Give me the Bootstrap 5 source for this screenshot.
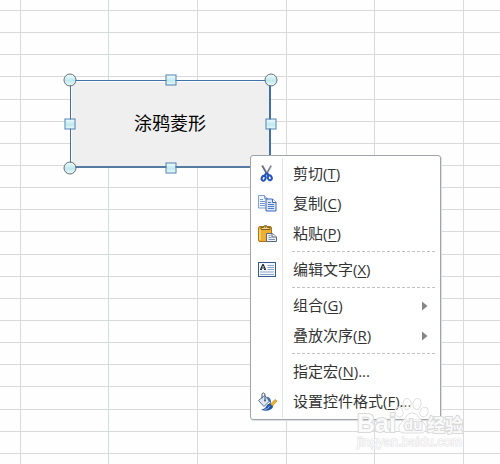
<!DOCTYPE html>
<html lang="zh-CN">
<head>
<meta charset="utf-8">
<meta name="viewport" content="width=device-width, initial-scale=1">
<title>工作表</title>
<link href="https://cdn.jsdelivr.net/npm/bootstrap@5.3.0/dist/css/bootstrap.min.css" rel="stylesheet">
<style>
  body { font-family: "Open Sans", "Noto Sans CJK SC", sans-serif; background: #fefefe; }
  .sheet-grid { table-layout: fixed; border-collapse: separate; border-spacing: 0; min-width: 100%; width: 0; }
  .sheet-grid col { width: 89px; }
  .sheet-grid col:nth-child(3n+2) { width: 88px; }
  .sheet-grid col:first-child { width: 21px; }
  .sheet-grid td { height: 22px; padding: 0; border: solid #d8dadb; border-width: 0 1px 1px 0; }
  .sheet-grid tr:first-child td { height: 11px; }
  .sheet-grid tr:nth-child(7n+5) td { height: 23px; }

  /* selected form control */
  .form-shape { left: 70px; top: 80px; width: 201px; height: 88px; }
  .shape-face { background: #efefef; border: 1px solid #3f73a8; border-right-width: 2px; border-bottom: 2px solid #557ba3; box-shadow: inset 1px 1px #fff; font-size: 18px; font-weight: 400; color: #000; }
  .grip { width: 11px; height: 11px; border: 1px solid #4f81b0; background: linear-gradient(#edfbfc, #bfe9ee 55%, #e4f9fb); }
  .grip-round { width: 13px; height: 13px; border-color: #666e76; border-radius: 50%; }

  /* context menu */
  .ctx-menu { left: 250px; top: 155px; width: 191px; padding: 3px 1px 2px; background: #fff; border: 1px solid #9fa4ab; border-radius: 3px; box-shadow: 1px 1px 1px #dcdee0; }
  .ctx-menu::before { content: ""; position: absolute; left: 31px; top: 2px; bottom: 1px; border-left: 1px solid #e1e4e7; }
  .ctx-item { height: 30px; border: 0; background: none; padding: 0 11px 0 5px; font-size: 15px; line-height: 20px; color: #333; white-space: nowrap; }
  .ctx-item:hover { background: #fdf1c9; }
  .ctx-icon { width: 20px; height: 20px; margin-right: 16px; }
  .ctx-label { margin-bottom: 2px; }
  .ctx-item u { text-underline-offset: 2px; text-decoration-thickness: 1px; }
  .ctx-rule { height: 6px; margin-left: 40px; margin-right: 2px; }
  .ctx-rule::before { content: ""; display: block; height: 1px; margin-top: 2px; background: repeating-linear-gradient(90deg, #bfc3c7 0 3px, transparent 3px 5px); }
  .ctx-arrow { width: 6px; height: 10px; }

  .watermark { left: 355px; top: 397px; width: 110px; height: 54px; pointer-events: none; }
</style>
<script src="https://cdn.jsdelivr.net/npm/bootstrap@5.3.0/dist/js/bootstrap.bundle.min.js"></script>
</head>
<body>
<main class="position-relative vh-100 overflow-hidden">
  <table class="sheet-grid" aria-label="工作表">
    <colgroup id="cols"></colgroup>
    <tbody id="rows"></tbody>
  </table>

  <div class="form-shape position-absolute">
    <button type="button" class="shape-face w-100 h-100 p-0 d-block">涂鸦菱形</button>
    <span class="grip grip-round position-absolute translate-middle top-0 start-0"></span>
    <span class="grip position-absolute translate-middle top-0 start-50"></span>
    <span class="grip grip-round position-absolute translate-middle top-0 start-100"></span>
    <span class="grip position-absolute translate-middle top-50 start-0"></span>
    <span class="grip position-absolute translate-middle top-50 start-100"></span>
    <span class="grip grip-round position-absolute translate-middle top-100 start-0"></span>
    <span class="grip position-absolute translate-middle top-100 start-50"></span>
  </div>

  <div class="ctx-menu position-absolute d-flex flex-column" role="menu">
    <button type="button" role="menuitem" class="ctx-item d-flex align-items-center">
      <svg class="ctx-icon" viewBox="0 0 20 20" fill="none" aria-hidden="true">
        <path d="M5.2 1.5 11.2 12" stroke="#777f8c" stroke-width="2"/><path d="M14.2 1.5 8.3 12" stroke="#a4adb9" stroke-width="2"/><path d="M5.2 2 9.5 9.5M14 2 10.5 8" stroke="#596373" stroke-width=".7"/>
        <path d="m9.7 8.7-2.3 3.2m2.3-3.2 2.3 3" stroke="#2857b8" stroke-width="2"/>
        <ellipse cx="6.6" cy="14.3" rx="1.9" ry="2.4" transform="rotate(25 6.6 14.3)" stroke="#2455bc" stroke-width="2"/>
        <ellipse cx="12.8" cy="13.8" rx="1.9" ry="2.4" transform="rotate(-25 12.8 13.8)" stroke="#2455bc" stroke-width="2"/>
      </svg>
      <span class="ctx-label">剪切(<u>T</u>)</span>
    </button>
    <button type="button" role="menuitem" class="ctx-item d-flex align-items-center">
      <svg class="ctx-icon" viewBox="0 0 20 20" aria-hidden="true">
        <path d="M1.5 1.5h6l3 3v9.5h-9z" fill="#f0f5ff" stroke="#7f9ed2"/><path d="M7.5 1.5v3h3" fill="#c4d5f4" stroke="#7f9ed2"/>
        <path d="M3 5.5h3M3 7.5h5M3 9.5h5M3 11.5h5" stroke="#7697d2"/>
        <path d="M9 5h6.5l3.5 3.5v8.5H9z" fill="#d8e6ff" stroke="#3e66b7"/><path d="M15.5 5v3.5H19" fill="#fff" stroke="#3e66b7"/>
        <path d="M11 8.5h3M11 10.5h6M11 12.5h6M11 14.5h6" stroke="#517bcb"/>
      </svg>
      <span class="ctx-label">复制(<u>C</u>)</span>
    </button>
    <button type="button" role="menuitem" class="ctx-item d-flex align-items-center">
      <svg class="ctx-icon" viewBox="0 0 20 20" aria-hidden="true">
        <rect x="1.5" y="2.5" width="13" height="15" rx="1.5" fill="#edaf32" stroke="#ad7314"/>
        <path d="M3 5v11" stroke="#ffdb72" stroke-width="1.5"/>
        <path d="M4 5.5v-2h2.5a2 2 0 0 1 4 0H13v2z" fill="#f3d780" stroke="#795f28"/><circle cx="8.5" cy="3" r=".8" fill="#69531f"/>
        <path d="M9.5 9.5h6l4 3.5v4.5h-10z" fill="#edf1f6" stroke="#5b677a"/><path d="M15 9.5V13h4.5" fill="#fff" stroke="#5b677a"/>
        <path d="M11.5 11.5h2M11.5 13.5h3M11.5 15.5H18" stroke="#8293aa"/>
      </svg>
      <span class="ctx-label">粘贴(<u>P</u>)</span>
    </button>
    <div class="ctx-rule" role="separator"></div>
    <button type="button" role="menuitem" class="ctx-item d-flex align-items-center">
      <svg class="ctx-icon" viewBox="0 0 20 20" aria-hidden="true">
        <rect x="1.5" y="2.5" width="17" height="14" fill="#f4f8fd" stroke="#345a8c"/>
        <path d="M3.5 9.5 5.800 4.5h.4l2.300 5M4.500 8h3M3 9.500h2M7 9.500h2" fill="none" stroke="#252b34" stroke-width="1.2"/>
        <path d="M10.5 5.500H17M10.500 7.500H17M10.500 9.500H17M3 12h14M3 14.500h14" stroke="#8ba5c8"/>
      </svg>
      <span class="ctx-label">编辑文字(<u>X</u>)</span>
    </button>
    <div class="ctx-rule" role="separator"></div>
    <button type="button" role="menuitem" aria-haspopup="true" class="ctx-item d-flex align-items-center">
      <span class="ctx-icon"></span><span class="ctx-label">组合(<u>G</u>)</span>
      <svg class="ctx-arrow ms-auto" viewBox="0 0 6 10" aria-hidden="true"><path d="M0 .5 5.500 5 0 9.500z" fill="#858585"/></svg>
    </button>
    <button type="button" role="menuitem" aria-haspopup="true" class="ctx-item d-flex align-items-center">
      <span class="ctx-icon"></span><span class="ctx-label">叠放次序(<u>R</u>)</span>
      <svg class="ctx-arrow ms-auto" viewBox="0 0 6 10" aria-hidden="true"><path d="M0 .5 5.500 5 0 9.500z" fill="#858585"/></svg>
    </button>
    <div class="ctx-rule" role="separator"></div>
    <button type="button" role="menuitem" class="ctx-item d-flex align-items-center">
      <span class="ctx-icon"></span><span class="ctx-label">指定宏(<u>N</u>)...</span>
    </button>
    <button type="button" role="menuitem" class="ctx-item d-flex align-items-center">
      <svg class="ctx-icon" viewBox="0 0 20 20" aria-hidden="true">
        <path d="m1.500 8.500 6-5 5 5.500-5.500 5.500z" fill="#dce7f2" stroke="#58718e"/>
        <path d="M5 6.500V2.500Q5 .8 6.500 1T8 3v5" fill="none" stroke="#435a75"/><circle cx="8" cy="8.500" r="1" fill="#435a75"/>
        <path d="M9.500 4.500q5 .5 4.500 7l-2.500-2.800z" fill="#416fb2"/>
        <path d="M4 17.500q5 2.500 9.500 0 3-1.500 2.500-4.500l-3-2Q10 12 9 14.500 8 17.200 4 17.500z" fill="#2456a7"/>
        <path d="M7.500 17.600q4-.5 5-3.600" fill="none" stroke="#8fb4e8"/>
        <path d="m13.500 12 4.500-4.500 2 1.500-4.500 5z" fill="#efb52e" stroke="#aa7518" stroke-width=".6"/>
      </svg>
      <span class="ctx-label">设置控件格式(<u>F</u>)...</span>
    </button>
  </div>

  <svg class="watermark position-absolute" viewBox="0 0 110 54" role="img" aria-label="Baidu 经验">
    <g fill="#fff" fill-opacity=".3" stroke="#dedede">
      <ellipse cx="44" cy="15" rx="4" ry="5" transform="rotate(-20 44 15)"/>
      <ellipse cx="52" cy="7" rx="4" ry="5.500"/>
      <ellipse cx="62" cy="7" rx="4" ry="5.500" transform="rotate(12 62 7)"/>
      <ellipse cx="69" cy="15" rx="4" ry="5" transform="rotate(25 69 15)"/>
      <path fill-opacity=".8" d="M57 16c-5 0-6 5-10 9-5 5-4 11 2 11h16c7 0 8-6 3-11-4-4-6-9-11-9z"/>
    </g>
    <g fill="#fff" fill-opacity=".85" stroke="#dadada" stroke-width="2" paint-order="stroke" font-family="Liberation Sans, Noto Sans CJK SC, sans-serif" font-weight="700">
      <text x="2" y="35" font-size="25">Bai</text>
      <text x="49" y="33" font-size="15">du</text>
      <text x="72" y="35" font-size="18">经验</text>
      <text x="2" y="49" font-size="13" font-weight="400" stroke="#e3e3e3" stroke-width="1">jingyan.baidu.com</text>
    </g>
  </svg>
</main>
<script>
  // Fill the visible sheet with empty cells
  const columns = Math.ceil(window.innerWidth / 88) + 1;
  const lines = Math.ceil(window.innerHeight / 22) + 1;
  document.getElementById('cols').innerHTML = '<col>'.repeat(columns);
  document.getElementById('rows').innerHTML = ('<tr>' + '<td></td>'.repeat(columns) + '</tr>').repeat(lines);
</script>
</body>
</html>
